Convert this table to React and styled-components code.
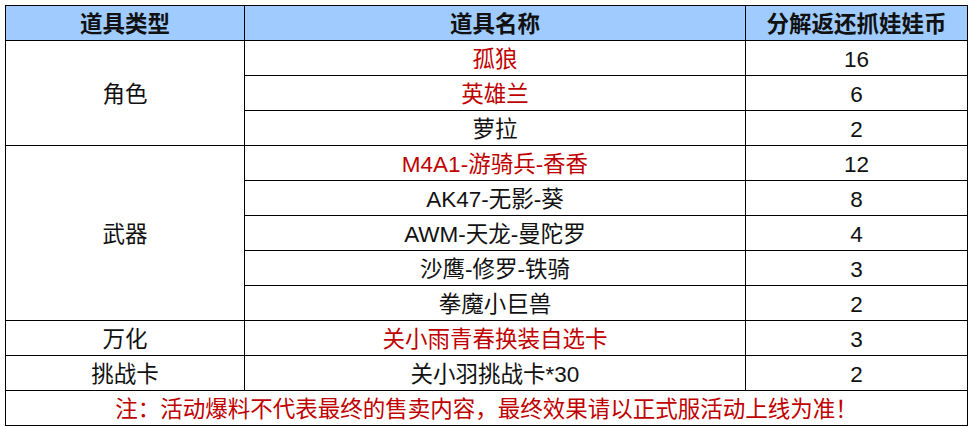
import React from 'react'
import styled, { createGlobalStyle } from 'styled-components'

const GlobalStyle = createGlobalStyle`
  html, body {
    margin: 0;
    padding: 0;
    background: #fff;
  }
  body {
    font-family: "Liberation Sans", "Noto Sans CJK SC", sans-serif;
  }
`

const Sheet = styled.div`
  width: 972px;
  height: 428px;
  box-sizing: border-box;
  padding: 5px 5px 0 5px;
`

const Table = styled.table`
  width: 962px;
  border-collapse: collapse;
  table-layout: fixed;
  color: #111;
  font-size: 22.5px;
  line-height: 1;
`

const Row = styled.tr`
  height: 35px;
`

const HeadCell = styled.th`
  background: #9fcbff;
  border: 1px solid #000;
  font-weight: 700;
  text-align: center;
  padding: 5px 0 0;
`

const Cell = styled.td`
  border: 1px solid #000;
  text-align: center;
  padding: 5px 0 0;
  color: ${(p) => (p.$red ? '#c00000' : '#111')};
`

const NoteCell = styled(Cell)`
  color: #c00000;
`

const groups = [
  {
    type: '角色',
    items: [
      { name: '孤狼', value: 16, red: true },
      { name: '英雄兰', value: 6, red: true },
      { name: '萝拉', value: 2 },
    ],
  },
  {
    type: '武器',
    items: [
      { name: 'M4A1-游骑兵-香香', value: 12, red: true },
      { name: 'AK47-无影-葵', value: 8 },
      { name: 'AWM-天龙-曼陀罗', value: 4 },
      { name: '沙鹰-修罗-铁骑', value: 3 },
      { name: '拳魔小巨兽', value: 2 },
    ],
  },
  {
    type: '万化',
    items: [{ name: '关小雨青春换装自选卡', value: 3, red: true }],
  },
  {
    type: '挑战卡',
    items: [{ name: '关小羽挑战卡*30', value: 2 }],
  },
]

export default function App() {
  return (
    <>
      <GlobalStyle />
      <Sheet>
        <Table>
          <colgroup>
            <col style={{ width: 239 }} />
            <col style={{ width: 501 }} />
            <col style={{ width: 222 }} />
          </colgroup>
          <thead>
            <Row>
              <HeadCell>道具类型</HeadCell>
              <HeadCell>道具名称</HeadCell>
              <HeadCell>分解返还抓娃娃币</HeadCell>
            </Row>
          </thead>
          <tbody>
            {groups.map((g) =>
              g.items.map((item, i) => (
                <Row key={g.type + i}>
                  {i === 0 && <Cell rowSpan={g.items.length}>{g.type}</Cell>}
                  <Cell $red={item.red}>{item.name}</Cell>
                  <Cell>{item.value}</Cell>
                </Row>
              ))
            )}
            <Row>
              <NoteCell colSpan={3}>
                注：活动爆料不代表最终的售卖内容，最终效果请以正式服活动上线为准！
              </NoteCell>
            </Row>
          </tbody>
        </Table>
      </Sheet>
    </>
  )
}
